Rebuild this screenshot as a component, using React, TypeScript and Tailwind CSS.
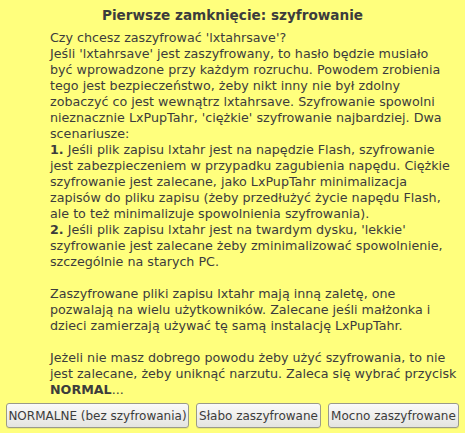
const lines: (string | [string, string])[] = [
  "Czy chcesz zaszyfrować 'lxtahrsave'?",
  "Jeśli 'lxtahrsave' jest zaszyfrowany, to hasło będzie musiało",
  "być wprowadzone przy każdym rozruchu. Powodem zrobienia",
  "tego jest bezpieczeństwo, żeby nikt inny nie był zdolny",
  "zobaczyć co jest wewnątrz lxtahrsave. Szyfrowanie spowolni",
  "nieznacznie LxPupTahr, 'ciężkie' szyfrowanie najbardziej. Dwa",
  "scenariusze:",
  ["1.", " Jeśli plik zapisu lxtahr jest na napędzie Flash, szyfrowanie"],
  "jest zabezpieczeniem w przypadku zagubienia napędu. Ciężkie",
  "szyfrowanie jest zalecane, jako LxPupTahr minimalizacja",
  "zapisów do pliku zapisu (żeby przedłużyć życie napędu Flash,",
  "ale to też minimalizuje spowolnienia szyfrowania).",
  ["2.", " Jeśli plik zapisu lxtahr jest na twardym dysku, 'lekkie'"],
  "szyfrowanie jest zalecane żeby zminimalizować spowolnienie,",
  "szczególnie na starych PC.",
  "",
  "Zaszyfrowane pliki zapisu lxtahr mają inną zaletę, one",
  "pozwalają na wielu użytkowników. Zalecane jeśli małżonka i",
  "dzieci zamierzają używać tę samą instalację LxPupTahr.",
  "",
  "Jeżeli nie masz dobrego powodu żeby użyć szyfrowania, to nie",
  "jest zalecane, żeby uniknąć narzutu. Zaleca się wybrać przycisk",
  ["NORMAL", "..."],
];

export default function App() {
  const btn =
    "h-[25px] px-0 rounded-[3px] border border-[#9a9a8a] bg-gradient-to-b from-[#fafafa] to-[#e4e4e0] text-[12px] text-[#3c3c3c] leading-none whitespace-nowrap shadow-[0_1px_0_rgba(0,0,0,0.08)]";
  return (
    <div className="w-[465px] h-[433px] bg-[#ffff7d] font-['DejaVu_Sans',sans-serif] text-[#3c3c3c] flex flex-col">
      <h1 className="text-center font-bold text-[13.6px] leading-[20px] pt-[5px]">
        Pierwsze zamknięcie: szyfrowanie
      </h1>
      <div className="pl-[50px] pt-[5px] text-[12.7px] leading-[16px] whitespace-pre">
        {lines.map((l, i) => (
          <div key={i} className="h-[16px]">
            {typeof l === "string" ? (
              l
            ) : (
              <>
                <b>{l[0]}</b>
                {l[1]}
              </>
            )}
          </div>
        ))}
      </div>
      <div className="flex gap-[7px] pl-[6px] pt-[5px]">
        <button className={`${btn} w-[183px]`}>NORMALNE (bez szyfrowania)</button>
        <button className={`${btn} w-[125px]`}>Słabo zaszyfrowane</button>
        <button className={`${btn} w-[131px]`}>Mocno zaszyfrowane</button>
      </div>
    </div>
  );
}
